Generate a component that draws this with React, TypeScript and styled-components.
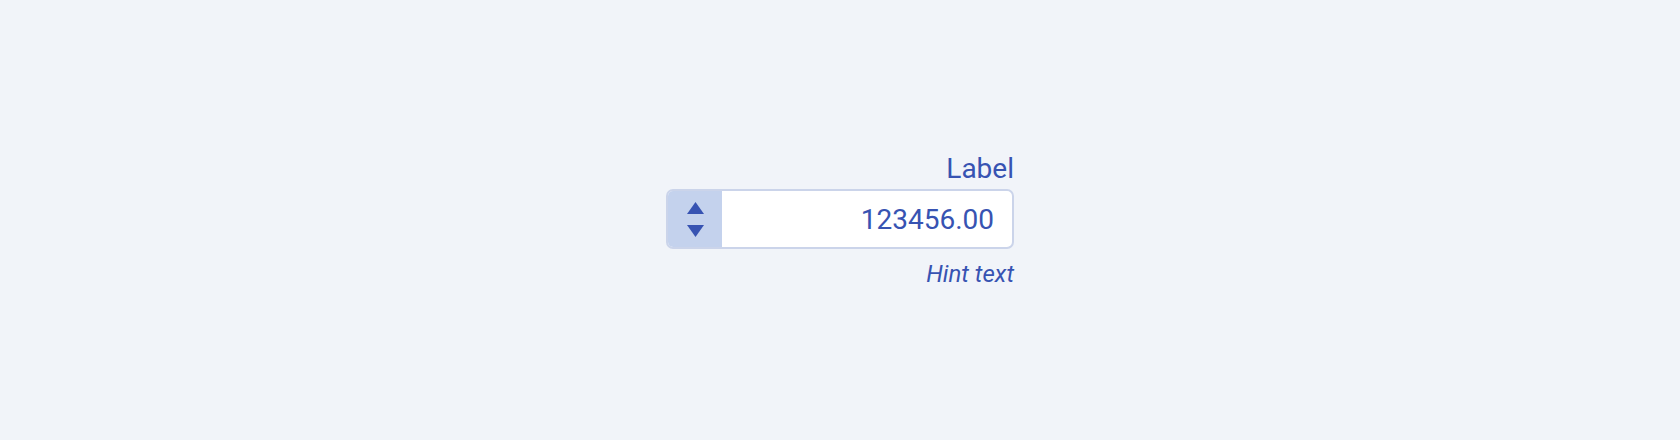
import React, { useState } from "react";
import styled, { createGlobalStyle } from "styled-components";

const GlobalStyle = createGlobalStyle`
	html, body {
		margin: 0;
		padding: 0;
		background: #f1f4f9;
		font-family: Roboto, "Liberation Sans", sans-serif;
	}
`;

const Page = styled.div`
	height: 440px;
	display: flex;
	align-items: center;
	justify-content: center;
`;

const Field = styled.div`
	width: 348px;
	display: flex;
	flex-direction: column;
	align-items: flex-end;
	color: #3753b2;
`;

const Label = styled.label`
	font-size: 28px;
	line-height: 34px;
	margin-bottom: 3px;
`;

const InputBox = styled.div`
	box-sizing: border-box;
	width: 100%;
	height: 60px;
	display: flex;
	border: 2px solid #cbd4ea;
	border-radius: 7px;
	background: #ffffff;
	overflow: hidden;
`;

const Stepper = styled.div`
	width: 54px;
	flex-shrink: 0;
	background: #c4d2ed;
	display: flex;
	flex-direction: column;
	align-items: center;
	justify-content: center;
	gap: 11px;
`;

const StepButton = styled.button`
	border: none;
	background: none;
	padding: 0;
	display: flex;
	cursor: pointer;
	color: #3753b2;
`;

const Input = styled.input`
	flex: 1;
	min-width: 0;
	border: none;
	outline: none;
	background: transparent;
	text-align: right;
	padding: 0 18px 0 12px;
	font-family: Roboto, "Liberation Sans", sans-serif;
	font-size: 28px;
	color: #3753b2;
`;

const Hint = styled.span`
	font-size: 24px;
	line-height: 27px;
	font-style: italic;
	margin-top: 12px;
`;

const Triangle = ({ down }: { down?: boolean }) => (
	<svg width="17" height="12" viewBox="0 0 17 12">
		<path fill="currentColor" d={down ? "M0 0h17L8.5 12z" : "M8.5 0L17 12H0z"} />
	</svg>
);

const App = () => {
	const [value, setValue] = useState(123456);

	return (
		<Page>
			<GlobalStyle />
			<Field>
				<Label>Label</Label>
				<InputBox>
					<Stepper>
						<StepButton onClick={() => setValue(value + 1)}>
							<Triangle />
						</StepButton>
						<StepButton onClick={() => setValue(value - 1)}>
							<Triangle down />
						</StepButton>
					</Stepper>
					<Input value={value.toFixed(2)} readOnly />
				</InputBox>
				<Hint>Hint text</Hint>
			</Field>
		</Page>
	);
};

export default App;
